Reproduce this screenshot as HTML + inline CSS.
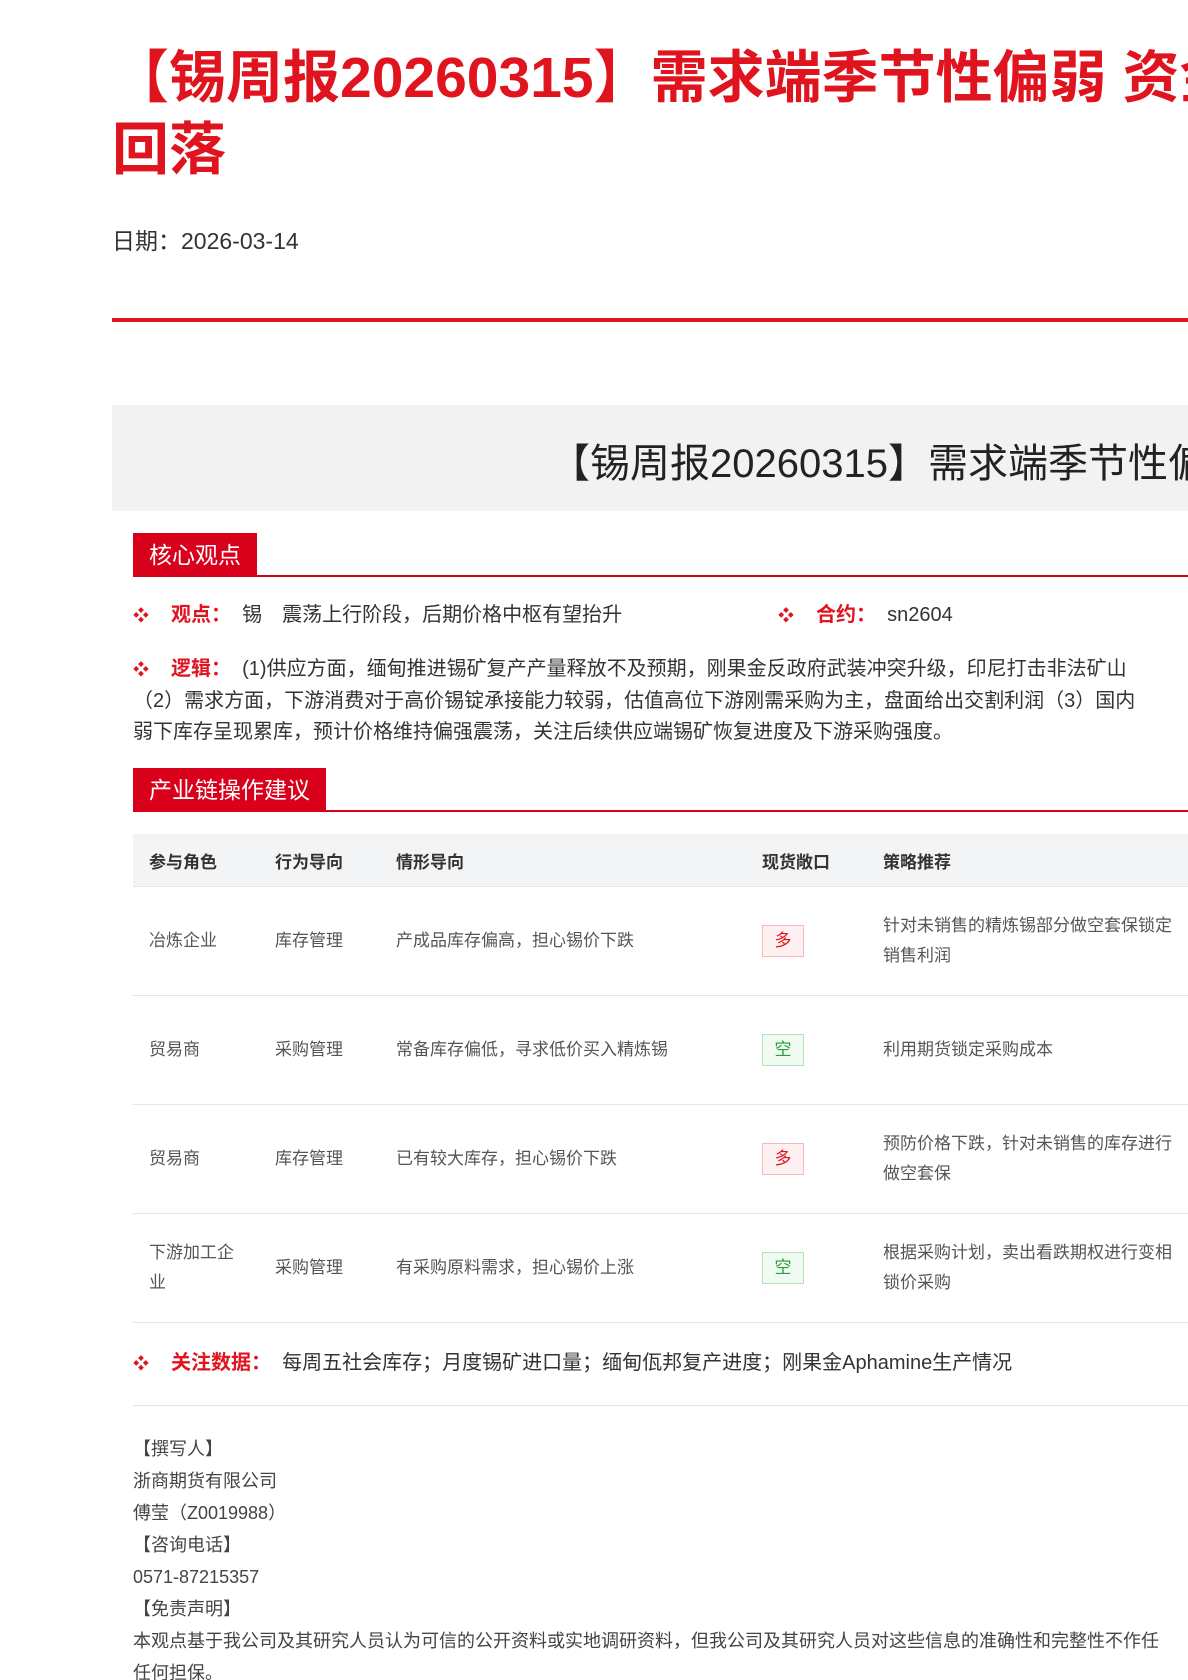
<!DOCTYPE html>
<html><head><meta charset="utf-8"><style>
html,body{margin:0;padding:0;width:1188px;height:1680px;overflow:hidden;background:#fff;font-family:"Liberation Sans","Noto Sans CJK SC",sans-serif;}
.wrap{position:absolute;left:112px;top:0;width:1076px;height:1680px;overflow:hidden;}
h1{position:absolute;left:0;top:42px;margin:0;font-size:57px;line-height:72px;color:#e0141e;font-weight:bold;white-space:nowrap;}
.date{position:absolute;left:0;top:222px;font-size:23px;color:#333;}
.redline{position:absolute;left:0;top:318px;width:1300px;height:4px;background:#e0141e;}
.gbox{position:absolute;left:0;top:405px;width:1300px;height:106px;background:#f2f2f2;}
.gbox span{position:absolute;left:438px;top:26px;font-size:40px;color:#222;white-space:nowrap;}
.sec{position:absolute;left:21px;width:1300px;height:42px;border-bottom:2px solid #d9001b;}
.sec b{display:inline-block;background:#d9001b;color:#fff;font-size:23px;font-weight:normal;height:42px;line-height:44px;padding:0 16px;}
.p{position:absolute;left:21px;font-size:20px;color:#333;white-space:nowrap;line-height:31px;}
.p .k{color:#e0141e;font-weight:bold;}
.p .d{color:#e0141e;font-size:16px;margin-right:22px;}
table{position:absolute;left:21px;top:834px;width:1300px;border-collapse:collapse;font-size:17px;color:#555;}
th{background:#f3f4f6;height:52px;text-align:left;font-weight:bold;color:#333;padding:0 0 0 16px;border-bottom:1px solid #e3e6eb;}
td{height:108px;padding:0 0 0 16px;border-bottom:1px solid #e3e6eb;line-height:30px;}
.tag{display:inline-block;width:40px;height:30px;line-height:30px;text-align:center;border:1px solid;font-size:17px;}
.r{color:#e0141e;border-color:#f5b8bb;background:#fdf0f0;}
.g{color:#2a9d3a;border-color:#b5e2bc;background:#effaf0;}
.foot{position:absolute;left:21px;top:1433px;font-size:18px;color:#444;line-height:32px;white-space:nowrap;}
</style></head><body>
<div class="wrap">
<h1>【锡周报20260315】需求端季节性偏弱 资金<br>回落</h1>
<div class="date">日期：2026-03-14</div>
<div class="redline"></div>
<div class="gbox"><span>【锡周报20260315】需求端季节性偏弱 资金</span></div>
<div class="sec" style="top:533px"><b>核心观点</b></div>
<div class="p" style="top:600px"><span class="d">❖</span><span class="k">观点：</span>&nbsp; 锡　震荡上行阶段，后期价格中枢有望抬升</div>
<div class="p" style="top:600px;left:666px"><span class="d">❖</span><span class="k">合约：</span>&nbsp; sn2604</div>
<div class="p" style="top:654px"><span class="d">❖</span><span class="k">逻辑：</span>&nbsp; (1)供应方面，缅甸推进锡矿复产产量释放不及预期，刚果金反政府武装冲突升级，印尼打击非法矿山<br>（2）需求方面，下游消费对于高价锡锭承接能力较弱，估值高位下游刚需采购为主，盘面给出交割利润（3）国内<br>弱下库存呈现累库，预计价格维持偏强震荡，关注后续供应端锡矿恢复进度及下游采购强度。</div>
<div class="sec" style="top:768px"><b>产业链操作建议</b></div>
<table>
<tr><th style="width:110px">参与角色</th><th style="width:105px">行为导向</th><th style="width:350px">情形导向</th><th style="width:105px">现货敞口</th><th>策略推荐</th></tr>
<tr><td>冶炼企业</td><td>库存管理</td><td>产成品库存偏高，担心锡价下跌</td><td><span class="tag r">多</span></td><td>针对未销售的精炼锡部分做空套保锁定<br>销售利润</td></tr>
<tr><td>贸易商</td><td>采购管理</td><td>常备库存偏低，寻求低价买入精炼锡</td><td><span class="tag g">空</span></td><td>利用期货锁定采购成本</td></tr>
<tr><td>贸易商</td><td>库存管理</td><td>已有较大库存，担心锡价下跌</td><td><span class="tag r">多</span></td><td>预防价格下跌，针对未销售的库存进行<br>做空套保</td></tr>
<tr><td>下游加工企<br>业</td><td>采购管理</td><td>有采购原料需求，担心锡价上涨</td><td><span class="tag g">空</span></td><td>根据采购计划，卖出看跌期权进行变相<br>锁价采购</td></tr>
</table>
<div class="p" style="top:1348px"><span class="d">❖</span><span class="k">关注数据：</span>&nbsp; 每周五社会库存；月度锡矿进口量；缅甸佤邦复产进度；刚果金Aphamine生产情况</div>
<div style="position:absolute;left:21px;top:1405px;width:1300px;height:1px;background:#e3e3e3"></div>
<div class="foot">【撰写人】<br>浙商期货有限公司<br>傅莹（Z0019988）<br>【咨询电话】<br>0571-87215357<br>【免责声明】<br>本观点基于我公司及其研究人员认为可信的公开资料或实地调研资料，但我公司及其研究人员对这些信息的准确性和完整性不作任<br>任何担保。</div>
</div>
</body></html>
